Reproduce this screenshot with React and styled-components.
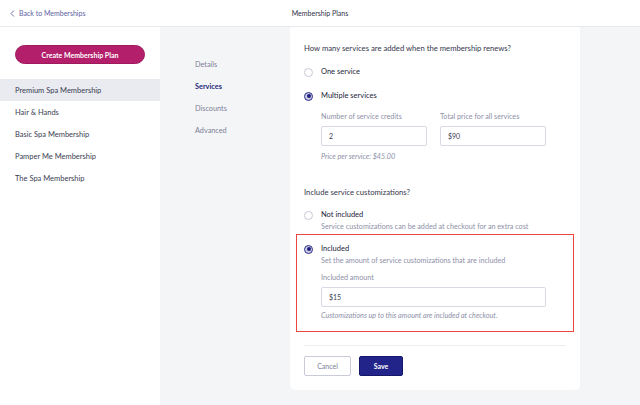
import styled, { createGlobalStyle } from 'styled-components'

const Global = createGlobalStyle`
  html, body { margin: 0; padding: 0; }
  body {
    font-family: Lato, "Liberation Sans", sans-serif;
    color: #2f3147;
    background: #f4f5f7;
  }
  * { box-sizing: border-box; }
`

const Page = styled.div`
  width: 640px;
  height: 405px;
  display: flex;
  flex-direction: column;
  overflow: hidden;
`

const Header = styled.header`
  height: 27px;
  flex: none;
  background: #fff;
  border-bottom: 1px solid #e8e9ee;
  display: flex;
  align-items: center;
  position: relative;
  padding-left: 10px;
`

const BackLink = styled.a`
  display: flex;
  align-items: center;
  gap: 4px;
  font-size: 7px;
  color: #5d61a3;
  text-decoration: none;
`

const Title = styled.div`
  position: absolute;
  left: 0;
  right: 0;
  text-align: center;
  font-size: 7px;
  color: #2f3147;
  pointer-events: none;
`

const Body = styled.div`
  flex: 1;
  display: flex;
  min-height: 0;
`

const Sidebar = styled.aside`
  width: 160px;
  flex: none;
  background: #fff;
  padding-top: 18px;
`

const CreateButton = styled.button`
  display: block;
  margin: 0 15px 15px;
  width: 130px;
  height: 19px;
  border: 1px solid #9e1a5c;
  border-radius: 10px;
  background: #b41f6c;
  color: #fff;
  font-family: inherit;
  font-size: 7px;
  font-weight: 700;
`

const PlanItem = styled.div`
  height: 22px;
  display: flex;
  align-items: center;
  padding-left: 15px;
  font-size: 7.5px;
  color: #3a3c52;
  background: ${p => (p.$active ? '#e9ebf0' : 'transparent')};
`

const SubNav = styled.nav`
  width: 130px;
  flex: none;
  padding: 26px 0 0 35px;
  display: flex;
  flex-direction: column;
`

const NavItem = styled.div`
  height: 22px;
  display: flex;
  align-items: center;
  font-size: 7.3px;
  color: ${p => (p.$active ? '#26287a' : '#7d8096')};
  font-weight: ${p => (p.$active ? 700 : 400)};
`

const Card = styled.main`
  width: 290px;
  flex: none;
  align-self: flex-start;
  background: #fff;
  border-radius: 0 0 5px 5px;
  padding: 16px 14px 14px;
`

const Question = styled.div`
  font-size: 7.7px;
  color: #34364c;
  line-height: 10px;
  margin-top: ${p => p.$top || 0}px;
`

const Option = styled.div`
  display: flex;
  gap: 8px;
  margin-top: ${p => p.$top || 0}px;
`

const Radio = styled.span`
  width: 9px;
  height: 9px;
  margin-top: 0.5px;
  border-radius: 50%;
  flex: none;
  border: 1px solid ${p => (p.$checked ? '#2c2f86' : '#c7c9d6')};
  background: ${p => (p.$checked ? '#c9cbe8' : '#fff')};
  display: flex;
  align-items: center;
  justify-content: center;
  &::after {
    content: '';
    width: 4px;
    height: 4px;
    border-radius: 50%;
    background: ${p => (p.$checked ? '#1c1f7a' : 'transparent')};
  }
`

const OptionBody = styled.div`
  flex: 1;
  display: flex;
  flex-direction: column;
`

const OptionLabel = styled.div`
  font-size: 7.5px;
  line-height: 10px;
  color: #23253a;
`

const Hint = styled.div`
  font-size: 7.2px;
  line-height: 10px;
  color: #8e90a8;
  margin-top: ${p => p.$top ?? 2}px;
  font-style: ${p => (p.$italic ? 'italic' : 'normal')};
`

const FieldRow = styled.div`
  display: grid;
  grid-template-columns: 106px 106px;
  gap: 13px;
  margin-top: 11px;
`

const Field = styled.label`
  display: flex;
  flex-direction: column;
  gap: 4px;
  margin-top: ${p => p.$top || 0}px;
`

const FieldLabel = styled.span`
  font-size: 7.2px;
  line-height: 10px;
  color: #8e90a8;
`

const Input = styled.div`
  height: 20px;
  border: 1px solid #d7d9e3;
  border-radius: 2px;
  display: flex;
  align-items: center;
  padding-left: 7px;
  font-size: 7px;
  color: #3a3c52;
  width: ${p => p.$width || 'auto'};
`

const Highlight = styled.div`
  margin: 2px -8px 0;
  padding: 9px 8px 10px 7px;
  border: 1.5px solid #e8463f;
`

const Divider = styled.hr`
  border: none;
  border-top: 1px solid #eceef2;
  margin: 13px 0 10px;
`

const Actions = styled.div`
  display: flex;
  gap: 8px;
`

const Button = styled.button`
  height: 20px;
  border-radius: 2px;
  font-family: inherit;
  font-size: 7px;
  padding: 0;
  width: ${p => (p.$primary ? '44px' : '47px')};
  border: 1px solid ${p => (p.$primary ? '#15176a' : '#c9cbd8')};
  background: ${p => (p.$primary ? '#23248a' : '#fff')};
  color: ${p => (p.$primary ? '#fff' : '#7d8096')};
  font-weight: ${p => (p.$primary ? 700 : 400)};
`

const plans = [
  'Premium Spa Membership',
  'Hair & Hands',
  'Basic Spa Membership',
  'Pamper Me Membership',
  'The Spa Membership',
]

const sections = ['Details', 'Services', 'Discounts', 'Advanced']

const App = () => (
  <Page>
    <Global />
    <Header>
      <BackLink href="#">
        <svg width="5" height="7" viewBox="0 0 5 7">
          <path d="M4 0.5 L1 3.5 L4 6.5" fill="none" stroke="#5d61a3" strokeWidth="0.9" />
        </svg>
        Back to Memberships
      </BackLink>
      <Title>Membership Plans</Title>
    </Header>
    <Body>
      <Sidebar>
        <CreateButton>Create Membership Plan</CreateButton>
        {plans.map((name, i) => (
          <PlanItem key={name} $active={i === 0}>{name}</PlanItem>
        ))}
      </Sidebar>
      <SubNav>
        {sections.map(name => (
          <NavItem key={name} $active={name === 'Services'}>{name}</NavItem>
        ))}
      </SubNav>
      <Card>
        <Question>How many services are added when the membership renews?</Question>
        <Option $top={14}>
          <Radio />
          <OptionBody>
            <OptionLabel>One service</OptionLabel>
          </OptionBody>
        </Option>
        <Option $top={14}>
          <Radio $checked />
          <OptionBody>
            <OptionLabel>Multiple services</OptionLabel>
            <FieldRow>
              <Field>
                <FieldLabel>Number of service credits</FieldLabel>
                <Input>2</Input>
              </Field>
              <Field>
                <FieldLabel>Total price for all services</FieldLabel>
                <Input>$90</Input>
              </Field>
            </FieldRow>
            <Hint $italic $top={6}>Price per service: $45.00</Hint>
          </OptionBody>
        </Option>

        <Question $top={25}>Include service customizations?</Question>
        <Option $top={13}>
          <Radio />
          <OptionBody>
            <OptionLabel>Not included</OptionLabel>
            <Hint>Service customizations can be added at checkout for an extra cost</Hint>
          </OptionBody>
        </Option>
        <Highlight>
          <Option>
            <Radio $checked />
            <OptionBody>
              <OptionLabel>Included</OptionLabel>
              <Hint>Set the amount of service customizations that are included</Hint>
              <Field $top={7}>
                <FieldLabel>Included amount</FieldLabel>
                <Input $width="225px">$15</Input>
              </Field>
              <Hint $italic $top={4}>Customizations up to this amount are included at checkout.</Hint>
            </OptionBody>
          </Option>
        </Highlight>
        <Divider />
        <Actions>
          <Button>Cancel</Button>
          <Button $primary>Save</Button>
        </Actions>
      </Card>
    </Body>
  </Page>
)

export default App
